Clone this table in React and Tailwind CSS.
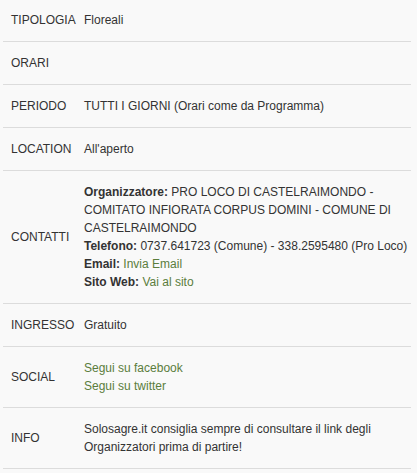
const LINK = 'text-[#5b7d3c]';

const ROWS = [
  { label: 'TIPOLOGIA', value: 'Floreali' },
  { label: 'ORARI', value: '' },
  { label: 'PERIODO', value: 'TUTTI I GIORNI (Orari come da Programma)' },
  { label: 'LOCATION', value: "All'aperto" },
  {
    label: 'CONTATTI',
    value: (
      <>
        <div><b>Organizzatore:</b> PRO LOCO DI CASTELRAIMONDO - COMITATO INFIORATA CORPUS DOMINI - COMUNE DI CASTELRAIMONDO</div>
        <div className="whitespace-nowrap"><b>Telefono:</b> 0737.641723 (Comune) - 338.2595480 (Pro Loco)</div>
        <div><b>Email:</b> <a href="#" className={LINK}>Invia Email</a></div>
        <div><b>Sito Web:</b> <a href="#" className={LINK}>Vai al sito</a></div>
      </>
    ),
  },
  { label: 'INGRESSO', value: 'Gratuito' },
  {
    label: 'SOCIAL',
    value: (
      <>
        <div><a href="#" className={LINK}>Segui su facebook</a></div>
        <div><a href="#" className={LINK}>Segui su twitter</a></div>
      </>
    ),
  },
  { label: 'INFO', value: 'Solosagre.it consiglia sempre di consultare il link degli Organizzatori prima di partire!' },
];

export default function App() {
  return (
    <div className="min-h-[473px] bg-[#f9f9f9] text-[#333] text-[12px] leading-[18px] font-['Liberation_Sans',Arial,sans-serif]">
      <div className="w-[411px] pl-[3px]">
        {ROWS.map((r, i) => (
          <div
            key={r.label}
            className={`flex items-center border-b border-[#dcdcdc] pb-3 ${i === 0 ? 'pt-[11px]' : 'pt-3'}`}
          >
            <div className="w-[81px] shrink-0 pl-2">{r.label}</div>
            <div className="flex-1 min-h-[18px]">{r.value}</div>
          </div>
        ))}
      </div>
    </div>
  );
}
